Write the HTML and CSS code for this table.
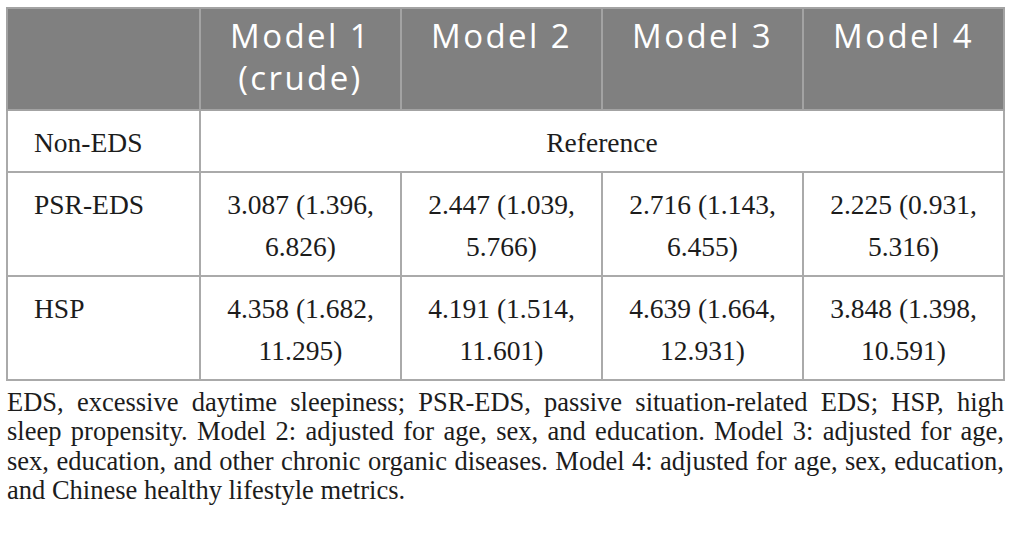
FILE: index.html
```html
<!DOCTYPE html>
<html lang="en">
<head>
<meta charset="utf-8">
<title>Table</title>
<link rel="stylesheet" href="styles.css">
</head>
<body>
<div class="page">
  <table class="data">
    <colgroup>
      <col class="c-label">
      <col class="c-model">
      <col class="c-model">
      <col class="c-model">
      <col class="c-model">
    </colgroup>
    <thead>
      <tr>
        <th></th>
        <th>Model 1<br>(crude)</th>
        <th>Model 2</th>
        <th>Model 3</th>
        <th>Model 4</th>
      </tr>
    </thead>
    <tbody>
      <tr>
        <td class="label">Non-EDS</td>
        <td colspan="4">Reference</td>
      </tr>
      <tr>
        <td class="label">PSR-EDS</td>
        <td>3.087 (1.396,<br>6.826)</td>
        <td>2.447 (1.039,<br>5.766)</td>
        <td>2.716 (1.143,<br>6.455)</td>
        <td>2.225 (0.931,<br>5.316)</td>
      </tr>
      <tr>
        <td class="label">HSP</td>
        <td>4.358 (1.682,<br>11.295)</td>
        <td>4.191 (1.514,<br>11.601)</td>
        <td>4.639 (1.664,<br>12.931)</td>
        <td>3.848 (1.398,<br>10.591)</td>
      </tr>
    </tbody>
  </table>
  <p class="note">EDS, excessive daytime sleepiness; PSR-EDS, passive situation-related EDS; HSP, high sleep propensity. Model 2: adjusted for age, sex, and education. Model 3: adjusted for age, sex, education, and other chronic organic diseases. Model 4: adjusted for age, sex, education, and Chinese healthy lifestyle metrics.</p>
</div>
</body>
</html>
```
FILE: styles.css
```css
html, body {
  margin: 0;
  padding: 0;
  background: #ffffff;
}

.page {
  padding: 7px 6px 0 6px;
  width: 998px;
}

.data {
  border-collapse: collapse;
  table-layout: fixed;
  width: 998px;
  font-family: "Liberation Serif", "Times New Roman", serif;
  font-size: 27.5px;
  color: #1c1c1c;
}

.c-label {
  width: 193px;
}

.c-model {
  width: 201px;
}

.data th,
.data td {
  border: 2px solid #aaaaaa;
}

.data th {
  background: #808080;
  color: #ffffff;
  font-family: "Open Sans", "DejaVu Sans", sans-serif;
  font-weight: 400;
  font-size: 33px;
  line-height: 42px;
  letter-spacing: 2.4px;
  text-align: center;
  vertical-align: top;
  padding: 6px 4px 10px;
  border-color: #a3a3a3;
}

.data td {
  line-height: 42px;
  text-align: center;
  vertical-align: top;
  padding: 11px 4px 7px;
}

.data td.label {
  text-align: left;
  padding-left: 26px;
}

.note {
  margin: 7px 0 0 1px;
  font-family: "Liberation Serif", "Times New Roman", serif;
  font-size: 26.5px;
  line-height: 29.3px;
  text-align: justify;
  color: #1c1c1c;
}
```
